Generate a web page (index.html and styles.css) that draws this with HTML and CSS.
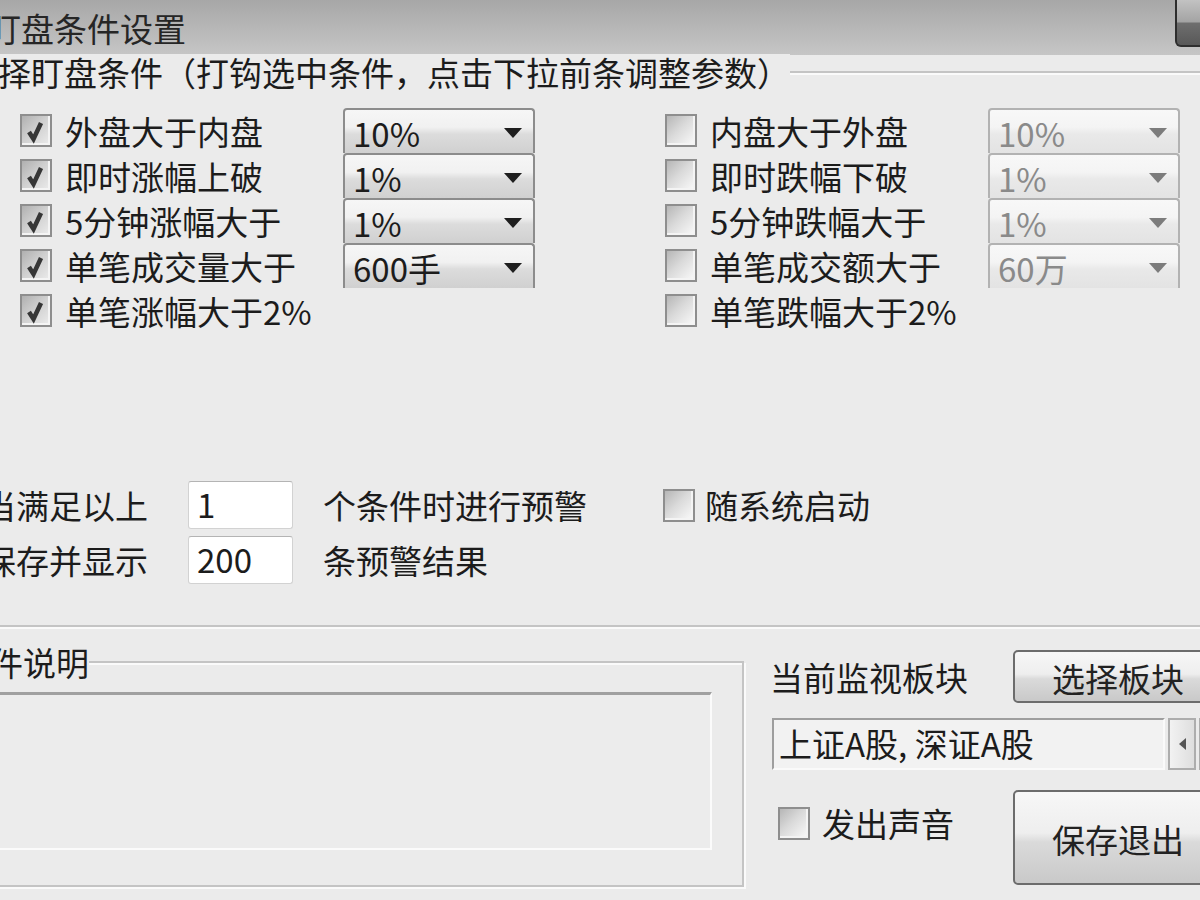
FILE: index.html
```html
<!DOCTYPE html>
<html lang="zh-CN">
<head>
    <meta charset="UTF-8">
    <title>盯盘条件设置</title>
    <link rel="stylesheet" href="styles.css">
</head>
<body>
<div class="dialog">
    <div class="titlebar">
        <span class="title">盯盘条件设置</span>
        <span class="close"></span>
    </div>
    <div class="main">
        <fieldset class="group conds">
            <legend>选择盯盘条件（打钩选中条件，点击下拉前条调整参数）</legend>
            <div class="cond-cols">
                <div class="cond-col">
                    <div class="cond">
                        <span class="check on"><svg width="28" height="29" viewBox="0 0 28 29"><polyline points="7,16 11.5,23 19,7"/></svg></span>
                        <span class="cond-name">外盘大于内盘</span>
                        <span class="combo"><span>10%</span><i class="drop"></i></span>
                    </div>
                    <div class="cond">
                        <span class="check on"><svg width="28" height="29" viewBox="0 0 28 29"><polyline points="7,16 11.5,23 19,7"/></svg></span>
                        <span class="cond-name">即时涨幅上破</span>
                        <span class="combo"><span>1%</span><i class="drop"></i></span>
                    </div>
                    <div class="cond">
                        <span class="check on"><svg width="28" height="29" viewBox="0 0 28 29"><polyline points="7,16 11.5,23 19,7"/></svg></span>
                        <span class="cond-name">5分钟涨幅大于</span>
                        <span class="combo"><span>1%</span><i class="drop"></i></span>
                    </div>
                    <div class="cond">
                        <span class="check on"><svg width="28" height="29" viewBox="0 0 28 29"><polyline points="7,16 11.5,23 19,7"/></svg></span>
                        <span class="cond-name">单笔成交量大于</span>
                        <span class="combo"><span>600手</span><i class="drop"></i></span>
                    </div>
                    <div class="cond">
                        <span class="check on"><svg width="28" height="29" viewBox="0 0 28 29"><polyline points="7,16 11.5,23 19,7"/></svg></span>
                        <span class="cond-name">单笔涨幅大于2%</span>
                    </div>
                </div>
                <div class="cond-col">
                    <div class="cond">
                        <span class="check"></span>
                        <span class="cond-name">内盘大于外盘</span>
                        <span class="combo off"><span>10%</span><i class="drop"></i></span>
                    </div>
                    <div class="cond">
                        <span class="check"></span>
                        <span class="cond-name">即时跌幅下破</span>
                        <span class="combo off"><span>1%</span><i class="drop"></i></span>
                    </div>
                    <div class="cond">
                        <span class="check"></span>
                        <span class="cond-name">5分钟跌幅大于</span>
                        <span class="combo off"><span>1%</span><i class="drop"></i></span>
                    </div>
                    <div class="cond">
                        <span class="check"></span>
                        <span class="cond-name">单笔成交额大于</span>
                        <span class="combo off"><span>60万</span><i class="drop"></i></span>
                    </div>
                    <div class="cond">
                        <span class="check"></span>
                        <span class="cond-name">单笔跌幅大于2%</span>
                    </div>
                </div>
            </div>

            <div class="limits">
                <span>当满足以上</span>
                <span class="num">1</span>
                <span>个条件时进行预警</span>
                <span class="opt"><span class="check"></span>随系统启动</span>
                <span>保存并显示</span>
                <span class="num">200</span>
                <span>条预警结果</span>
            </div>
        </fieldset>

        <div class="lower">
            <fieldset class="group notes">
                <legend>条件说明</legend>
                <div class="notes-box"></div>
            </fieldset>

            <div class="side">
                <div class="side-row">
                    <span class="side-label">当前监视板块</span>
                    <span class="btn pick">选择板块</span>
                </div>
                <div class="board">
                    <span class="board-text">上证A股, 深证A股</span>
                    <span class="spin"><i class="left"></i></span>
                    <span class="spin"></span>
                </div>
                <div class="side-row foot">
                    <span class="opt sound"><span class="check"></span>发出声音</span>
                    <span class="btn save">保存退出</span>
                </div>
            </div>
        </div>
    </div>
</div>
</body>
</html>
```

FILE: styles.css
```css
* {
    box-sizing: border-box;
}

html, body {
    margin: 0;
}

body {
    width: 1200px;
    height: 900px;
    overflow: hidden;
    background: #ebebeb;
    color: #1c1c1c;
    font-family: "Noto Sans CJK SC", "Noto Sans", sans-serif;
    font-size: 33px;
    line-height: 36px;
}

.dialog {
    width: 1300px;
    margin-left: -55px;
}

/* title bar */
.titlebar {
    display: flex;
    align-items: flex-start;
    height: 55px;
    padding: 0 10px 0 43px;
    background: linear-gradient(#a7a7a7, #c6c6c6);
}
.title {
    align-self: center;
    color: #262626;
}
.close {
    margin-left: auto;
    width: 60px;
    height: 47px;
    border: 2px solid #2e2e2e;
    border-top: 0;
    border-radius: 0 0 6px 6px;
    background: linear-gradient(#c2c2c2, #a4a4a4 48%, #6e6e6e 52%, #585858);
}

.main {
    padding-left: 10px;
}

/* etched group boxes */
.group {
    margin: 0;
    border: 2px solid #c4c4c4;
    box-shadow: inset 2px 2px 0 #fafafa, 2px 2px 0 #fafafa;
}
.group legend {
    padding: 0;
    background: #ebebeb;
}

.conds {
    margin-top: -1px;
    padding: 18px 0 40px 8px;
}

.cond-cols {
    display: grid;
    grid-template-columns: 645px 645px;
    margin-left: 55px;
}
.cond {
    display: grid;
    grid-template-columns: 45px 278px 192px;
    align-items: center;
    height: 45px;
}

/* checkbox */
.check {
    display: inline-block;
    flex: none;
    width: 32px;
    height: 33px;
    border: 2px solid #8e8e8e;
    background: linear-gradient(135deg, #b6b6b6 0%, #dadada 45%, #fbfbfb 100%);
    box-shadow: inset -2px -2px 0 #f4f4f4;
}
.check.on {
    background: linear-gradient(135deg, #b0b0b0 0%, #cfcfcf 45%, #ececec 100%);
}
.check svg {
    display: block;
}
.check polyline {
    fill: none;
    stroke: #363636;
    stroke-width: 4.5;
}

/* drop-down lists */
.combo {
    align-self: stretch;
    display: flex;
    align-items: center;
    justify-content: space-between;
    padding: 2px 11px 0 8px;
    border: 2px solid #8c8c8c;
    border-bottom: 0;
    border-radius: 4px 4px 0 0;
    background: linear-gradient(#f6f6f6, #f1f1f1 40%, #dcdcdc 56%, #d0d0d0);
}
.drop {
    width: 0;
    height: 0;
    border-left: 9px solid transparent;
    border-right: 9px solid transparent;
    border-top: 10px solid #1e1e1e;
}
.combo.off {
    border-color: #b2b2b2;
    color: #8a8a8a;
    background: linear-gradient(#f8f8f8, #f4f4f4 40%, #e9e9e9 56%, #e3e3e3);
}
.combo.off .drop {
    border-top-color: #7c7c7c;
}

/* warning thresholds */
.limits {
    display: grid;
    grid-template-columns: 205px 135px 340px auto;
    grid-auto-rows: 50px;
    row-gap: 5px;
    align-items: center;
    margin: 147px 0 0 18px;
}
.num {
    width: 105px;
    height: 48px;
    padding: 4px 0 0 8px;
    border: 1px solid #d2d2d2;
    border-top-color: #b4b4b4;
    border-radius: 3px;
    background: #fff;
}
.opt {
    display: flex;
    align-items: center;
    gap: 10px;
}

/* lower part */
.lower {
    display: flex;
    align-items: flex-start;
    margin-top: 17px;
}

.notes {
    width: 789px;
    padding: 12px 30px 35px 0;
}
.notes-box {
    height: 158px;
    margin-left: 15px;
    border: 3px solid #a0a0a0;
    border-right: 2px solid #fbfbfb;
    border-bottom: 2px solid #fbfbfb;
    background: #ececec;
}

.side {
    margin-left: 26px;
    padding-top: 6px;
}
.side-row {
    display: flex;
    align-items: center;
    height: 53px;
}
.side-label {
    width: 243px;
}

.btn {
    display: flex;
    align-items: center;
    justify-content: center;
    width: 210px;
    height: 53px;
    padding-top: 2px;
    border: 2px solid #6c6c6c;
    border-radius: 5px;
    background: linear-gradient(#f7f7f7, #eeeeee 45%, #dadada 55%, #c9c9c9);
    color: #222;
}

.board {
    display: flex;
    height: 52px;
    margin: 15px 0 0 2px;
}
.board-text {
    width: 393px;
    padding: 5px 0 0 5px;
    border: 2px solid #9e9e9e;
    border-right-color: #fafafa;
    border-bottom-color: #fafafa;
    background: #f2f2f2;
}
.spin {
    display: flex;
    align-items: center;
    justify-content: center;
    width: 28px;
    margin-left: 3px;
    border: 2px solid #adadad;
    background: linear-gradient(90deg, #f2f2f2, #dedede);
}
.spin .left {
    width: 0;
    height: 0;
    border-top: 6px solid transparent;
    border-bottom: 6px solid transparent;
    border-right: 7px solid #555;
}

.foot {
    align-items: flex-start;
    height: 95px;
    margin-top: 20px;
}
.sound {
    width: 243px;
    padding: 15px 0 0 8px;
    gap: 12px;
}
.save {
    height: 95px;
}
```
